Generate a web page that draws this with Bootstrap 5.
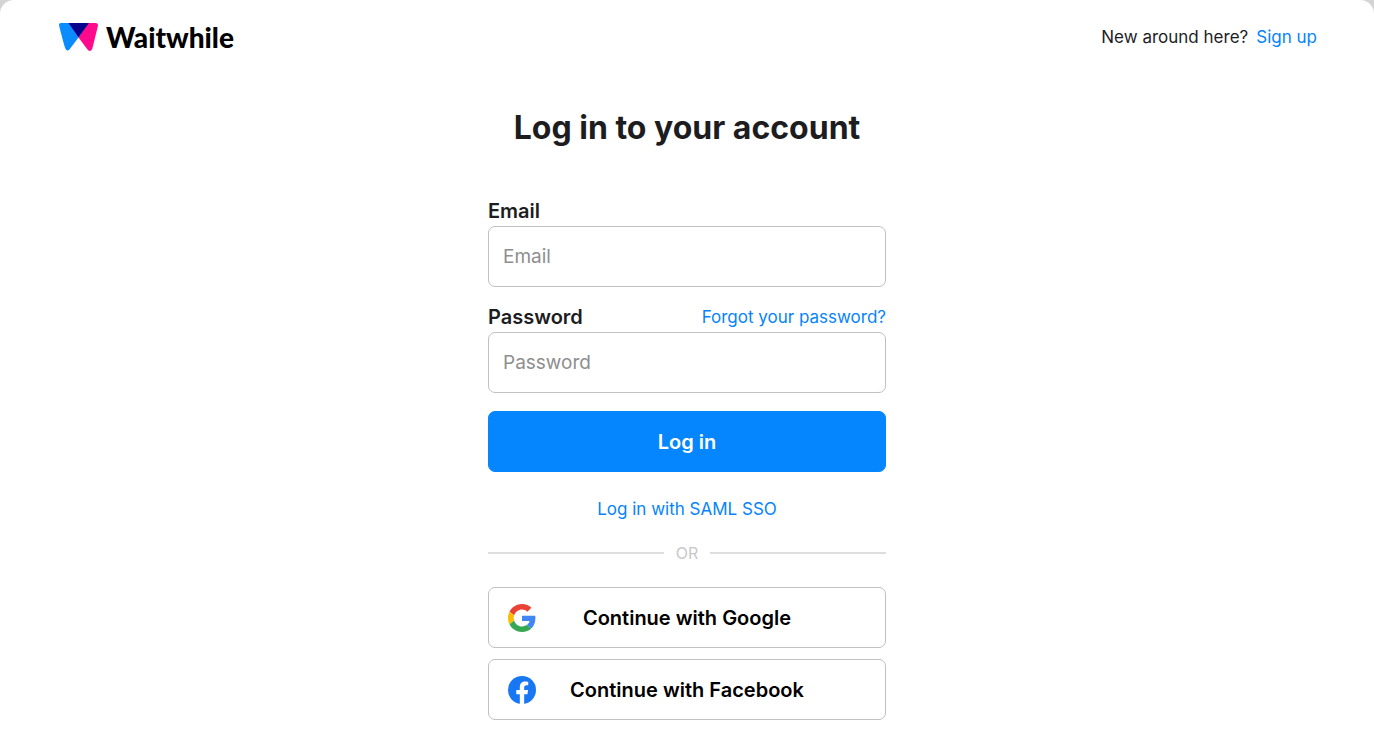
<!DOCTYPE html>
<html lang="en">
<head>
<meta charset="utf-8">
<meta name="viewport" content="width=device-width, initial-scale=1">
<title>Log in - Waitwhile</title>
<link href="https://cdn.jsdelivr.net/npm/bootstrap@5.3.0/dist/css/bootstrap.min.css" rel="stylesheet">
<style>
  html { background: #d4d4d4; }
  body { font-family: Inter, "Liberation Sans", sans-serif; font-size: 17px; line-height: 24px; color: #1d1d1f; background: transparent; }
  .page { border-radius: 14px 14px 0 0; background: #fff; }
  a { color: #0583ff; text-decoration: none; }
  a:hover { text-decoration: underline; }
  .topbar { padding: 17px 57px; }
  .brand-name { font-family: Lato, "Liberation Sans", sans-serif; font-weight: 900; font-size: 28px; line-height: 40px; color: #000; }
  .brand-mark { width: 41px; height: 30px; margin-right: 8px; }
  .login { width: 100%; max-width: 398px; padding-top: 34px; padding-bottom: 30px; }
  .login h1 { font-size: 32px; line-height: 40px; font-weight: 700; margin-bottom: 51px; }
  .field { margin-bottom: 18px; }
  .field-head { line-height: 25px; margin-bottom: 2px; }
  .field-head label { font-size: 20px; font-weight: 600; }
  .login .form-control, .login .btn { height: 61px; border-radius: 7px; }
  .login .form-control { border-color: #c0c0c0; padding: 0 14px; font-size: 19px; }
  .login .form-control::placeholder { color: #8e8e8e; }
  .login .btn { font-size: 20px; font-weight: 600; }
  .btn-login { --bs-btn-color: #fff; --bs-btn-bg: #0586ff; --bs-btn-border-color: #0586ff; --bs-btn-hover-color: #fff; --bs-btn-hover-bg: #0075e6; margin-top: 18px; }
  .saml { margin-top: 25px; }
  .divider { margin: 20px 0 22px; gap: 12px; font-size: 16px; color: #c8c8c8; }
  .divider hr { margin: 0; border-top: 2px solid #dedede; opacity: 1; }
  .social { gap: 11px; }
  .btn-social { --bs-btn-color: #000; --bs-btn-bg: #fff; --bs-btn-border-color: #c0c0c0; --bs-btn-hover-bg: #f5f5f5; --bs-btn-hover-border-color: #c0c0c0; --bs-btn-padding-x: 19px; }
  .btn-social svg { width: 28px; height: 28px; }
  .btn-social span { margin-right: 28px; }
</style>
</head>
<body>
<div class="page min-vh-100">
  <header class="topbar d-flex justify-content-between align-items-center">
    <a class="d-flex align-items-center text-decoration-none" href="#">
      <svg class="brand-mark" viewBox="0 0 41 30" aria-hidden="true">
        <path fill="#0a8cff" d="M4 1H12L21.500 15.500L12.800 27Q10.800 30 8.600 27Q7.400 25 2.200 4Q1.500 1 4 1Z"/>
        <path fill="#ff0a8c" d="M31 1H38.500Q41.500 1 40.900 4L35.400 26.500Q34 30.500 30.900 28L21.500 15.500Z"/>
        <path fill="#08008c" d="M11.500 1H32L21.500 15.500Z"/>
      </svg>
      <span class="brand-name">Waitwhile</span>
    </a>
    <div>New around here?<a class="ms-2" href="#">Sign up</a></div>
  </header>
  <main class="login mx-auto">
    <h1 class="text-center text-nowrap">Log in to your account</h1>
    <form>
      <div class="field">
        <div class="field-head d-flex"><label for="email">Email</label></div>
        <input class="form-control" type="email" id="email" placeholder="Email">
      </div>
      <div>
        <div class="field-head d-flex justify-content-between">
          <label for="password">Password</label>
          <a href="#">Forgot your password?</a>
        </div>
        <input class="form-control" type="password" id="password" placeholder="Password">
      </div>
      <button class="btn btn-login w-100" type="submit">Log in</button>
    </form>
    <div class="saml text-center"><a href="#">Log in with SAML SSO</a></div>
    <div class="divider d-flex align-items-center"><hr class="flex-fill">OR<hr class="flex-fill"></div>
    <div class="social d-grid">
      <button class="btn btn-social d-flex align-items-center" type="button">
        <svg viewBox="0 0 48 48" aria-hidden="true">
          <path fill="#EA4335" d="M24 9.500c3.540 0 6.710 1.220 9.210 3.600l6.850-6.850C35.900 2.380 30.470 0 24 0 14.620 0 6.510 5.380 2.560 13.220l7.980 6.190C12.430 13.720 17.740 9.500 24 9.500z"/>
          <path fill="#4285F4" d="M46.980 24.550c0-1.570-.15-3.090-.38-4.550H24v9.020h12.940c-.58 2.960-2.260 5.480-4.780 7.180l7.730 6c4.510-4.180 7.090-10.360 7.090-17.650z"/>
          <path fill="#FBBC05" d="M10.530 28.590c-.48-1.450-.76-2.990-.76-4.590s.27-3.140.76-4.590l-7.980-6.190C.92 16.460 0 20.120 0 24c0 3.880.92 7.540 2.560 10.780l7.970-6.190z"/>
          <path fill="#34A853" d="M24 48c6.480 0 11.930-2.130 15.890-5.810l-7.730-6c-2.150 1.450-4.920 2.300-8.160 2.300-6.260 0-11.570-4.220-13.470-9.910l-7.980 6.190C6.510 42.620 14.620 48 24 48z"/>
        </svg>
        <span class="flex-fill text-center">Continue with Google</span>
      </button>
      <button class="btn btn-social d-flex align-items-center" type="button">
        <svg viewBox="0 0 24 24" aria-hidden="true">
          <circle cx="12" cy="12" r="12" fill="#1877F2"/>
          <path fill="#fff" d="M10.130 24V15.560H7.080V12.070h3.050V9.430c0-3.010 1.790-4.670 4.530-4.670 1.310 0 2.680.23 2.680.23v2.950h-1.510c-1.490 0-1.960.93-1.960 1.880v2.250h3.330l-.53 3.490h-2.800V24z"/>
        </svg>
        <span class="flex-fill text-center">Continue with Facebook</span>
      </button>
    </div>
  </main>
</div>
<script src="https://cdn.jsdelivr.net/npm/bootstrap@5.3.0/dist/js/bootstrap.bundle.min.js"></script>
</body>
</html>
